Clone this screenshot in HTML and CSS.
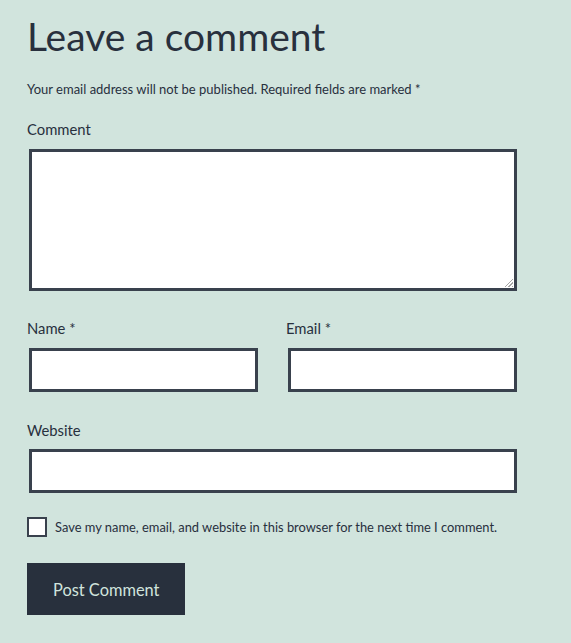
FILE: index.html
```html
<!DOCTYPE html>
<html lang="en">
<head>
<meta charset="utf-8">
<title>Leave a comment</title>
<link rel="stylesheet" href="styles.css">
</head>
<body>
<div class="respond">
  <h2 class="reply-title">Leave a comment</h2>
  <form class="comment-form">
    <p class="notes">Your email address will not be published. Required fields are marked <span class="req">*</span></p>
    <div class="field field-comment">
      <label class="label" for="comment">Comment</label>
      <textarea id="comment" class="textarea"></textarea>
    </div>
    <div class="row">
      <div class="field">
        <label class="label" for="author">Name <span class="req">*</span></label>
        <input id="author" class="input" type="text">
      </div>
      <div class="field">
        <label class="label" for="email">Email <span class="req">*</span></label>
        <input id="email" class="input" type="email">
      </div>
    </div>
    <div class="field field-url">
      <label class="label" for="url">Website</label>
      <input id="url" class="input" type="url">
    </div>
    <div class="consent">
      <input id="consent" class="checkbox" type="checkbox">
      <label class="consent-label" for="consent">Save my name, email, and website in this browser for the next time I comment.</label>
    </div>
    <button class="submit" type="button">Post Comment</button>
  </form>
</div>
</body>
</html>
```
FILE: styles.css
```css
html, body {
  margin: 0;
  padding: 0;
}
body {
  background: #d1e4dd;
  color: #28303d;
  font-family: "Lato", "Open Sans", sans-serif;
  width: 571px;
  height: 643px;
  overflow: hidden;
}
.respond {
  width: 492px;
  margin-left: 27px;
}
.reply-title {
  margin: 0;
  padding-top: 12px;
  font-size: 39px;
  line-height: 48px;
  font-weight: 400;
}
.comment-form {
  display: flex;
  flex-direction: column;
}
.notes {
  margin: 19px 0 0;
  font-size: 13px;
  line-height: 20px;
}
.label {
  display: block;
  font-size: 14.8px;
  line-height: 20px;
  margin-bottom: 10px;
}
.field-comment {
  margin-top: 20px;
}
.textarea,
.input {
  display: block;
  box-sizing: border-box;
  margin: 0 2px;
  width: calc(100% - 4px);
  border: 3px solid #39414d;
  background-color: #fff;
  border-radius: 0;
  font: inherit;
  outline: none;
}
.textarea {
  height: 142px;
  resize: none;
  background-image:
    linear-gradient(to bottom right, #fff 50%, rgba(255, 255, 255, 0) 50%),
    repeating-linear-gradient(135deg, #a6a6a6 0 1px, rgba(255, 255, 255, 0) 1px 2.6px);
  background-size: 10px 10px, 10px 10px;
  background-position: right 1px bottom 1px, right 1px bottom 1px;
  background-repeat: no-repeat;
}
.input {
  height: 44px;
}
.row {
  display: grid;
  grid-template-columns: 1fr 1fr;
  column-gap: 26px;
  margin-top: 27px;
}
.field-url {
  margin-top: 28px;
}
.field-url .label {
  margin-bottom: 9px;
}
.consent {
  display: flex;
  align-items: center;
  gap: 8px;
  margin-top: 24px;
}
.checkbox {
  appearance: none;
  -webkit-appearance: none;
  margin: 0;
  width: 20px;
  height: 20px;
  box-sizing: border-box;
  border: 2px solid #39414d;
  background: #fff;
  flex: none;
}
.consent-label {
  font-size: 12.9px;
  line-height: 20px;
}
.submit {
  align-self: flex-start;
  margin-top: 26px;
  height: 52px;
  padding: 0 26px;
  border: 0;
  border-radius: 0;
  background: #28303d;
  color: #d1e4dd;
  font-family: inherit;
  font-size: 16.4px;
}
```
